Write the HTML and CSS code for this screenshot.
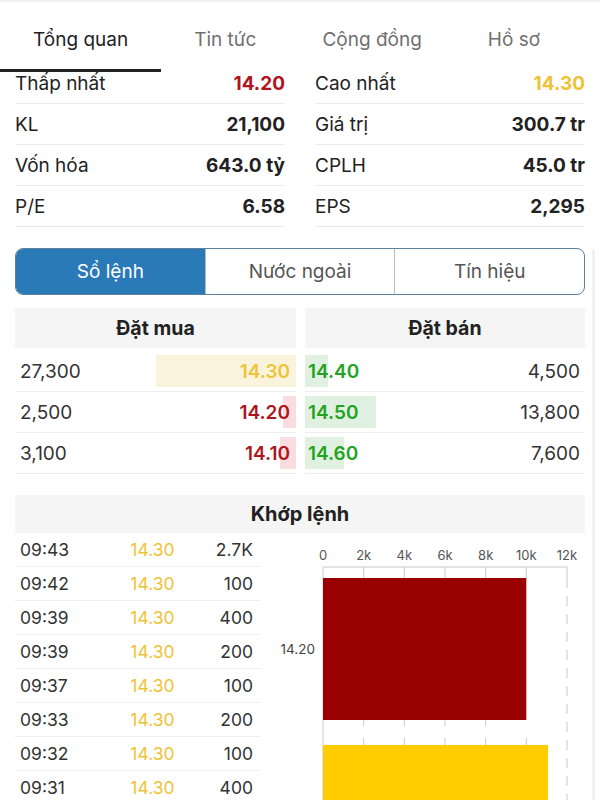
FILE: index.html
```html
<!DOCTYPE html>
<html lang="vi">
<head>
    <meta charset="UTF-8">
    <title>Tổng quan</title>
    <link rel="stylesheet" href="styles.css">
</head>
<body>
<div id="page">

    <div class="tabs">
        <div class="tab active">Tổng quan</div>
        <div class="tab">Tin tức</div>
        <div class="tab">Cộng đồng</div>
        <div class="tab">Hồ sơ</div>
    </div>

    <div class="stats">
        <div class="stat"><span>Thấp nhất</span><b class="red">14.20</b></div>
        <div class="stat"><span>Cao nhất</span><b class="yellow">14.30</b></div>
        <div class="stat"><span>KL</span><b>21,100</b></div>
        <div class="stat"><span>Giá trị</span><b>300.7 tr</b></div>
        <div class="stat"><span>Vốn hóa</span><b>643.0 tỷ</b></div>
        <div class="stat"><span>CPLH</span><b>45.0 tr</b></div>
        <div class="stat"><span>P/E</span><b>6.58</b></div>
        <div class="stat"><span>EPS</span><b>2,295</b></div>
    </div>

    <div class="seg">
        <div class="seg_item current">Sổ lệnh</div>
        <div class="seg_item">Nước ngoài</div>
        <div class="seg_item">Tín hiệu</div>
    </div>

    <div class="book">
        <div class="book_side">
            <div class="book_head">Đặt mua</div>
            <div class="book_row">
                <span class="vol">27,300</span>
                <span class="price yellow"><i class="bar bar_yellow" style="width:50%"></i>14.30</span>
            </div>
            <div class="book_row">
                <span class="vol">2,500</span>
                <span class="price red"><i class="bar bar_red" style="width:4.6%"></i>14.20</span>
            </div>
            <div class="book_row">
                <span class="vol">3,100</span>
                <span class="price red"><i class="bar bar_red" style="width:5.7%"></i>14.10</span>
            </div>
        </div>
        <div class="book_side sell">
            <div class="book_head">Đặt bán</div>
            <div class="book_row">
                <span class="price green"><i class="bar bar_green" style="width:8.2%"></i>14.40</span>
                <span class="vol">4,500</span>
            </div>
            <div class="book_row">
                <span class="price green"><i class="bar bar_green" style="width:25.3%"></i>14.50</span>
                <span class="vol">13,800</span>
            </div>
            <div class="book_row">
                <span class="price green"><i class="bar bar_green" style="width:13.9%"></i>14.60</span>
                <span class="vol">7,600</span>
            </div>
        </div>
    </div>

    <div class="match_head">Khớp lệnh</div>
    <div class="match">
        <div class="match_list">
            <div class="match_row"><span>09:43</span><span class="yellow">14.30</span><span>2.7K</span></div>
            <div class="match_row"><span>09:42</span><span class="yellow">14.30</span><span>100</span></div>
            <div class="match_row"><span>09:39</span><span class="yellow">14.30</span><span>400</span></div>
            <div class="match_row"><span>09:39</span><span class="yellow">14.30</span><span>200</span></div>
            <div class="match_row"><span>09:37</span><span class="yellow">14.30</span><span>100</span></div>
            <div class="match_row"><span>09:33</span><span class="yellow">14.30</span><span>200</span></div>
            <div class="match_row"><span>09:32</span><span class="yellow">14.30</span><span>100</span></div>
            <div class="match_row"><span>09:31</span><span class="yellow">14.30</span><span>400</span></div>
        </div>

        <svg class="chart" width="325" height="267" viewBox="0 0 325 267">
            <g font-size="13" fill="#555" text-anchor="middle">
                <text x="58" y="27">0</text>
                <text x="98.7" y="27">2k</text>
                <text x="139.3" y="27">4k</text>
                <text x="180" y="27">6k</text>
                <text x="220.7" y="27">8k</text>
                <text x="261.3" y="27">10k</text>
                <text x="302" y="27">12k</text>
            </g>
            <g stroke="#c8c8c8" stroke-width="1">
                <line x1="58" y1="34" x2="302" y2="34"/>
                <line x1="58" y1="34" x2="58" y2="267"/>
                <line x1="98.7" y1="34" x2="98.7" y2="45"/>
                <line x1="139.3" y1="34" x2="139.3" y2="45"/>
                <line x1="180" y1="34" x2="180" y2="45"/>
                <line x1="220.7" y1="34" x2="220.7" y2="45"/>
                <line x1="261.3" y1="34" x2="261.3" y2="45"/>
                <line x1="302" y1="34" x2="302" y2="45"/>
                <line x1="98.7" y1="187" x2="98.7" y2="193"/>
                <line x1="139.3" y1="187" x2="139.3" y2="193"/>
                <line x1="180" y1="187" x2="180" y2="193"/>
                <line x1="220.7" y1="187" x2="220.7" y2="193"/>
                <line x1="98.7" y1="205" x2="98.7" y2="212"/>
                <line x1="139.3" y1="205" x2="139.3" y2="212"/>
                <line x1="180" y1="205" x2="180" y2="212"/>
                <line x1="220.7" y1="205" x2="220.7" y2="212"/>
                <line x1="261.3" y1="205" x2="261.3" y2="212"/>
                <line x1="302" y1="45" x2="302" y2="267" stroke-dasharray="10 8"/>
            </g>
            <rect x="58" y="45" width="203.3" height="142" fill="#990000"/>
            <rect x="58" y="212" width="225" height="60" fill="#ffcc00"/>
            <text x="50" y="121" font-size="13.5" fill="#444" text-anchor="end">14.20</text>
        </svg>
    </div>

    <div class="scroll_bar"></div>
</div>
</body>
</html>
```

FILE: styles.css
```css
body, div, span, b, i {
    margin: 0;
    padding: 0;
}
body {
    background: #fff;
    font-family: Inter, "Liberation Sans", sans-serif;
    color: #222;
}
#page {
    width: 600px;
    height: 800px;
    position: relative;
    overflow: hidden;
}
.red {
    color: #b0151d;
}
.yellow {
    color: #eec337;
}
.green {
    color: #22a422;
}

/* top tabs */
.tabs {
    display: flex;
    height: 70px;
    border-top: 2px solid #f0f0f0;
    background: #fff;
    position: relative;
    z-index: 1;
}
.tab {
    padding: 7px 33px 0;
    display: flex;
    align-items: center;
    font-size: 19px;
    color: #707070;
    border-bottom: 3px solid transparent;
}
.tab.active {
    color: #222;
    border-bottom-color: #222;
}

/* stats */
.stats {
    display: grid;
    grid-template-columns: 1fr 1fr;
    column-gap: 30px;
    padding: 0 15px;
    margin-top: -9px;
}
.stat {
    height: 40px;
    display: flex;
    align-items: center;
    justify-content: space-between;
    border-bottom: 1px solid #ececec;
    font-size: 19px;
}
.stat b {
    font-weight: 700;
}

/* segmented control */
.seg {
    display: flex;
    margin: 21px 15px 0;
    height: 45px;
    border: 1px solid #5f819b;
    border-radius: 8px;
    overflow: hidden;
}
.seg_item {
    flex: 1;
    display: flex;
    align-items: center;
    justify-content: center;
    font-size: 19px;
    color: #555;
    border-left: 1px solid #bbb;
}
.seg_item.current {
    background: #2a7ab8;
    color: #fff;
    border-left: none;
}

/* order book */
.book {
    display: grid;
    grid-template-columns: 281px 280px;
    column-gap: 9px;
    padding: 0 15px;
    margin-top: 13px;
}
.book_side {
    position: relative;
    z-index: 0;
}
.book_head {
    height: 40px;
    margin-bottom: 3px;
    background: #f5f5f5;
    display: flex;
    align-items: center;
    justify-content: center;
    font-size: 19.5px;
    font-weight: 700;
}
.book_row {
    height: 40px;
    display: flex;
    align-items: center;
    justify-content: space-between;
    border-bottom: 1px solid #ededed;
    font-size: 19px;
    position: relative;
}
.book_row .vol {
    padding: 0 5px;
    color: #333;
}
.book_row .price {
    padding: 0 6px 0 3px;
    font-weight: 600;
}
.sell .book_row .price {
    padding: 0 3px;
}
.bar {
    position: absolute;
    top: 4px;
    bottom: 4px;
    right: 0;
    z-index: -1;
}
.sell .bar {
    left: 0;
    right: auto;
}
.bar_yellow {
    background: #fbf4dc;
}
.bar_red {
    background: #fbdde0;
}
.bar_green {
    background: #e1f1e1;
}

/* matched orders */
.match_head {
    margin: 21px 15px 0;
    height: 38px;
    background: #f5f5f5;
    display: flex;
    align-items: center;
    justify-content: center;
    font-size: 20px;
    font-weight: 700;
}
.match {
    display: flex;
    padding-left: 15px;
}
.match_list {
    width: 245px;
}
.match_row {
    height: 33px;
    display: grid;
    grid-template-columns: 90px 95px 1fr;
    align-items: center;
    border-bottom: 1px solid #efefef;
    font-size: 17.5px;
    color: #333;
}
.match_row span:first-child {
    padding-left: 5px;
}
.match_row span:nth-child(2) {
    text-align: center;
}
.match_row span:last-child {
    text-align: right;
    padding-right: 7px;
}
.chart {
    display: block;
    margin-left: 5px;
    font-family: Inter, "Liberation Sans", sans-serif;
}

.scroll_bar {
    position: absolute;
    left: 592px;
    top: 250px;
    width: 3px;
    height: 550px;
    background: #f1f1f1;
}
```
